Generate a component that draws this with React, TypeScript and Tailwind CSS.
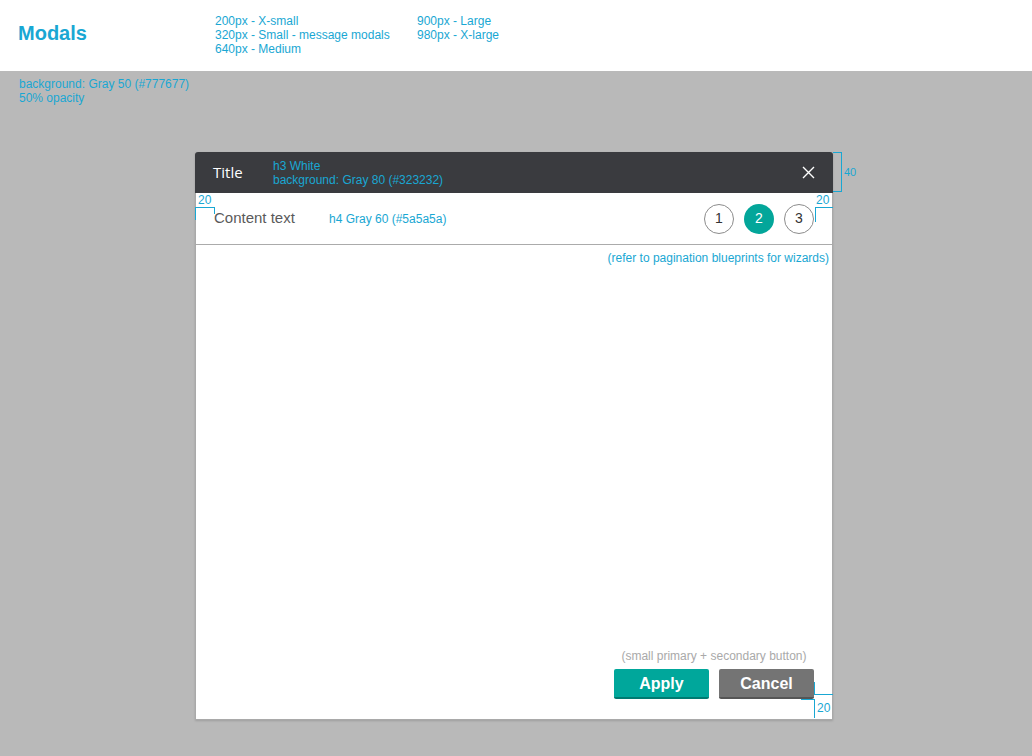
const cyan = "text-[#19a7d3]";

const Step = ({ n, active }: { n: number; active?: boolean }) => (
  <div
    className={
      active
        ? "w-[30px] h-[30px] rounded-full bg-[#03a69a] text-white flex items-center justify-center text-[14px]"
        : "w-[30px] h-[30px] rounded-full border border-[#8c8c8c] bg-white text-[#333] flex items-center justify-center text-[14px]"
    }
  >
    {n}
  </div>
);

const App = () => {
  return (
    <div className="w-[1032px] h-[756px] bg-[#b9b9b9] overflow-hidden font-['Liberation_Sans',Arial,sans-serif]">
      {/* top bar */}
      <div className="h-[71px] bg-white flex items-start">
        <div className={`w-[215px] shrink-0 pl-[18px] pt-[18px] text-[20px] font-bold ${cyan}`}>Modals</div>
        <div className={`w-[202px] shrink-0 pt-[14px] text-[12px] leading-[14px] ${cyan}`}>
          <div>200px - X-small</div>
          <div>320px - Small - message modals</div>
          <div>640px - Medium</div>
        </div>
        <div className={`pt-[14px] text-[12px] leading-[14px] ${cyan}`}>
          <div>900px - Large</div>
          <div>980px - X-large</div>
        </div>
      </div>

      <div className={`pl-[19px] pt-[6px] text-[12px] leading-[14px] ${cyan}`}>
        <div>background: Gray 50 (#777677)</div>
        <div>50% opacity</div>
      </div>

      {/* modal */}
      <div className="relative ml-[195px] mt-[47px] w-[638px] h-[568px] flex flex-col shadow-[0_1px_2px_rgba(0,0,0,0.15)]">
        <div className="h-[41px] bg-[#3a3b3f] rounded-t-[3px] flex items-center pl-[18px] pr-[18px]">
          <div className="w-[60px] text-white text-[15px] font-['Open_Sans',sans-serif]">Title</div>
          <div className={`text-[12px] leading-[14px] ${cyan}`}>
            <div>h3 White</div>
            <div>background: Gray 80 (#323232)</div>
          </div>
          <div className="ml-auto">
            <svg width="13" height="13" viewBox="0 0 13 13">
              <path d="M1 1L12 12M12 1L1 12" stroke="#fff" strokeWidth="1.4" />
            </svg>
          </div>
        </div>

        <div className="flex-1 bg-white border-x border-b border-[#a9a9a9] flex flex-col">
          <div className="h-[52px] border-b border-[#ababab] flex items-center pl-[18px] pr-[18px]">
            <div className="w-[115px] text-[15px] text-[#5a5a5a]">Content text</div>
            <div className={`text-[12px] ${cyan}`}>h4 Gray 60 (#5a5a5a)</div>
            <div className="ml-auto flex gap-[10px]">
              <Step n={1} />
              <Step n={2} active />
              <Step n={3} />
            </div>
          </div>

          <div className={`pt-[6px] pr-[3px] text-right text-[12px] leading-[14px] ${cyan}`}>
            (refer to pagination blueprints for wizards)
          </div>

          <div className="mt-auto flex justify-end pr-[18px] pb-[20px]">
            <div className="flex flex-col items-center">
              <div className="text-[12px] leading-[14px] text-[#a9a9a9] mb-[6px]">(small primary + secondary button)</div>
              <div className="flex gap-[10px]">
                <button className="w-[95px] h-[30px] pt-[1px] bg-[#00a79b] border-b-2 border-[#007a71] rounded-[2px] text-white font-bold text-[16px]">
                  Apply
                </button>
                <button className="w-[95px] h-[30px] pt-[1px] bg-[#747474] border-b-2 border-[#555] rounded-[2px] text-white font-bold text-[16px]">
                  Cancel
                </button>
              </div>
            </div>
          </div>
        </div>

        {/* spec annotations */}
        <div className="absolute left-[638px] top-0 w-[9px] h-[40px] border-t border-r border-b border-[#19a7d3]" />
        <div className={`absolute left-[649px] top-[12px] text-[11px] ${cyan}`}>40</div>

        <div className={`absolute left-[3px] top-[41px] text-[12px] leading-[14px] ${cyan}`}>20</div>
        <div className="absolute left-0 top-[55px] w-[19px] h-[13px] border-l border-t border-[#19a7d3]" />
        <div className="absolute left-[19px] top-[55px] w-px h-[7px] bg-[#19a7d3]" />

        <div className={`absolute left-[621px] top-[41px] text-[12px] leading-[14px] ${cyan}`}>20</div>
        <div className="absolute left-[620px] top-[55px] w-[18px] h-[15px] border-l border-t border-[#19a7d3]" />

        <div className="absolute left-[619px] top-[530px] w-[19px] h-[13px] border-l border-b border-[#19a7d3]" />
        <div className="absolute left-[606px] top-[547px] w-[14px] h-[19px] border-t border-r border-[#19a7d3]" />
        <div className={`absolute left-[622px] top-[549px] text-[12px] leading-[14px] ${cyan}`}>20</div>
      </div>
    </div>
  );
};

export default App;
